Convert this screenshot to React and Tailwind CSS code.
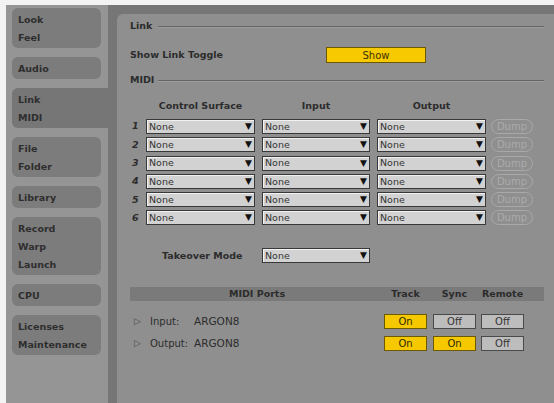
import React from 'react';

const tabs = [
  { lines: ['Look', 'Feel'] },
  { lines: ['Audio'] },
  { lines: ['Link', 'MIDI'], active: true },
  { lines: ['File', 'Folder'] },
  { lines: ['Library'] },
  { lines: ['Record', 'Warp', 'Launch'] },
  { lines: ['CPU'] },
  { lines: ['Licenses', 'Maintenance'] },
];

const Arrow = () => <span className="text-[9px] leading-none text-[#111]">▼</span>;

const Select = ({ w }) => (
  <div
    className={`${w} h-[15px] flex items-center justify-between pl-[2px] pr-[2px] bg-[#d2d2d2] border border-[#383838] shadow-[inset_1px_1px_0_#f2f2f2]`}
  >
    <span className="text-[9.5px] leading-none text-[#333]">None</span>
    <Arrow />
  </div>
);

const Section = ({ title }) => (
  <div className="flex items-center h-[14px]">
    <span className="w-[28px] font-bold text-[9.5px] text-[#2c2c2c]">{title}</span>
    <div className="flex-1 h-[1px] bg-[#666] shadow-[0_1px_0_#9c9c9c]" />
  </div>
);

const Toggle = ({ on }) =>
  on ? (
    <div className="w-[43px] h-[15px] flex items-center justify-center bg-[#f6c800] border border-[#6d5a00] text-[10px] text-[#2f2a00]">
      On
    </div>
  ) : (
    <div className="w-[43px] h-[15px] flex items-center justify-center bg-[#bdbdbd] border border-[#4a4a4a] text-[10px] text-[#333]">
      Off
    </div>
  );

export default function App() {
  return (
    <div
      className="w-[554px] h-[403px] bg-[#f3f3f3] pt-[5px] pl-[6px] flex overflow-hidden"
      style={{ fontFamily: '"DejaVu Sans", Verdana, sans-serif' }}
    >
      {/* sidebar */}
      <div className="w-[102px] h-full bg-[#959595] pt-[3px] pl-[6px] flex flex-col gap-[9px]">
        {tabs.map((t, i) => (
          <div
            key={i}
            className={`${t.active ? 'w-[96px] rounded-l-[6px] bg-[#767676]' : 'w-[89px] rounded-[6px] bg-[#7c7c7c]'} pl-[6px] pt-[3px] pb-[1px] flex flex-col`}
          >
            {t.lines.map((l) => (
              <span key={l} className="h-[18px] leading-[18px] font-bold text-[9.5px] text-[#2e2e2e]">
                {l}
              </span>
            ))}
          </div>
        ))}
      </div>

      {/* panel */}
      <div className="flex-1 h-full bg-[#767676] pt-[9px] pl-[9px]">
        <div className="h-full bg-[#8f8f8f] rounded-tl-[6px] pl-[13px] pr-[10px] pt-[5px]">
          <Section title="Link" />

          <div className="flex items-center mt-[14px] h-[16px]">
            <span className="w-[196px] font-bold text-[9.5px] text-[#2c2c2c]">Show Link Toggle</span>
            <div className="w-[100px] h-[16px] flex items-center justify-center bg-[#f7c900] border border-[#6d5a00] text-[10px] text-[#3a3200]">
              Show
            </div>
          </div>

          <div className="mt-[10px]">
            <Section title="MIDI" />
          </div>

          <div className="flex mt-[12px] h-[14px] items-center font-bold text-[9.5px] text-[#2c2c2c]">
            <span className="w-[16px]" />
            <span className="w-[109px] text-center">Control Surface</span>
            <span className="w-[7px]" />
            <span className="w-[108px] text-center">Input</span>
            <span className="w-[7px]" />
            <span className="w-[109px] text-center">Output</span>
          </div>

          <div className="flex flex-col gap-[3.3px] mt-[6px]">
            {[1, 2, 3, 4, 5, 6].map((n) => (
              <div key={n} className="flex items-center">
                <span className="w-[16px] pl-[2px] font-bold italic text-[9.5px] text-[#2c2c2c]">{n}</span>
                <Select w="w-[109px]" />
                <span className="w-[7px]" />
                <Select w="w-[108px]" />
                <span className="w-[7px]" />
                <Select w="w-[109px]" />
                <span className="w-[5px]" />
                <div className="w-[42px] h-[15px] rounded-full border border-[#a9a9a9] flex items-center justify-center text-[10px] text-[#ababab]">
                  Dump
                </div>
              </div>
            ))}
          </div>

          <div className="flex items-center mt-[23px] pl-[32px]">
            <span className="w-[100px] font-bold text-[9.5px] text-[#2c2c2c]">Takeover Mode</span>
            <Select w="w-[108px]" />
          </div>

          <div className="flex items-center mt-[24px] h-[14px] bg-[#7a7a7a] font-bold text-[9.5px] text-[#2c2c2c]">
            <span className="w-[254px] text-center">MIDI Ports</span>
            <span className="w-[43px] text-center">Track</span>
            <span className="w-[6px]" />
            <span className="w-[43px] text-center">Sync</span>
            <span className="w-[5px]" />
            <span className="w-[43px] text-center">Remote</span>
          </div>

          {[
            { label: 'Input:', vals: [true, false, false] },
            { label: 'Output:', vals: [true, true, false] },
          ].map((r, i) => (
            <div key={r.label} className={`flex items-center h-[15px] ${i === 0 ? 'mt-[13px]' : 'mt-[7px]'}`}>
              <span className="w-[20px] pl-[4px] text-[9px] text-[#4a4a4a]">▷</span>
              <span className="w-[44px] text-[10px] text-[#2c2c2c]">{r.label}</span>
              <span className="w-[190px] text-[10.5px] text-[#2c2c2c]">ARGON8</span>
              <Toggle on={r.vals[0]} />
              <span className="w-[6px]" />
              <Toggle on={r.vals[1]} />
              <span className="w-[5px]" />
              <Toggle on={r.vals[2]} />
            </div>
          ))}
        </div>
      </div>
    </div>
  );
}
